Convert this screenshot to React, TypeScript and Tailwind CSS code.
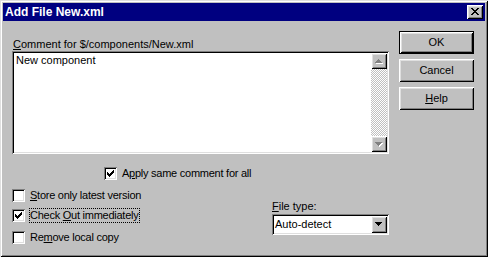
import React from "react";

const raised =
  "shadow-[inset_1px_1px_0_#ffffff,inset_-1px_-1px_0_#000000,inset_2px_2px_0_#dfdfdf,inset_-2px_-2px_0_#808080]";
const sunken =
  "shadow-[inset_1px_1px_0_#808080,inset_-1px_-1px_0_#ffffff,inset_2px_2px_0_#000000,inset_-2px_-2px_0_#dfdfdf]";

const CHECK =
  "M6 0h1v1h-1z M5 1h2v1h-2z M0 2h1v1h-1z M4 2h3v1h-3z M0 3h2v1h-2z M3 3h3v1h-3z M0 4h5v1h-5z M1 5h3v1h-3z M2 6h1v1h-1z";
const DOWN = "M0 0h7v1H0z M1 1h5v1H1z M2 2h3v1H2z M3 3h1v1H3z";
const UP = "M3 0h1v1H3z M2 1h3v1H2z M1 2h5v1H1z M0 3h7v1H0z";
const XMARK =
  "M0 0h2v1H0z M6 0h2v1H6z M1 1h2v1H1z M5 1h2v1H5z M2 2h4v1H2z M3 3h2v1H3z M2 4h4v1H2z M1 5h2v1H1z M5 5h2v1H5z M0 6h2v1H0z M6 6h2v1H6z";

function Box({ checked }: { checked?: boolean }) {
  return (
    <span className={`relative block w-[13px] h-[13px] bg-white shrink-0 ${sunken}`}>
      {checked && (
        <svg
          className="absolute left-[3px] top-[3px]"
          width="7"
          height="7"
          viewBox="0 0 7 7"
          shapeRendering="crispEdges"
        >
          <path d={CHECK} fill="#000" />
        </svg>
      )}
    </span>
  );
}

function Arrow({ d, disabled }: { d: string; disabled?: boolean }) {
  return (
    <svg width="8" height="5" viewBox="0 0 8 5" shapeRendering="crispEdges">
      {disabled ? (
        <>
          <path d={d} fill="#ffffff" transform="translate(1,1)" />
          <path d={d} fill="#808080" />
        </>
      ) : (
        <path d={d} fill="#000000" />
      )}
    </svg>
  );
}

function Btn({ children, def }: { children: React.ReactNode; def?: boolean }) {
  if (def) {
    return (
      <div className="w-[75px] h-[23px] border border-black">
        <div className={`w-full h-full flex items-center justify-center bg-[#c0c0c0] ${raised}`}>
          {children}
        </div>
      </div>
    );
  }
  return (
    <div className={`w-[75px] h-[23px] flex items-center justify-center bg-[#c0c0c0] ${raised}`}>
      {children}
    </div>
  );
}

export default function App() {
  return (
    <div
      className={`w-[488px] h-[257px] bg-[#c0c0c0] p-[3px] text-black text-[11px] leading-[13px] font-['Liberation_Sans',Arial,sans-serif] shadow-[inset_1px_1px_0_#dfdfdf,inset_-1px_-1px_0_#000000,inset_2px_2px_0_#ffffff,inset_-2px_-2px_0_#808080]`}
    >
      {/* Title bar */}
      <div className="h-[18px] bg-[#000080] flex items-center pl-[2px] pr-[2px]">
        <span className="text-white font-bold text-[12px] leading-[18px]">Add File New.xml</span>
        <div className={`ml-auto w-[16px] h-[14px] bg-[#c0c0c0] flex items-start justify-start pl-[4px] pt-[3px] ${raised}`}>
          <svg width="8" height="7" viewBox="0 0 8 7" shapeRendering="crispEdges">
            <path d={XMARK} fill="#000" />
          </svg>
        </div>
      </div>

      {/* Body */}
      <div className="flex pl-[9px] pt-[10px]">
        <div className="w-[377px] pt-[7px]">
          <div className="h-[13px] pl-[1px]">
            <span className="underline">C</span>omment for $/components/New.xml
          </div>
          <div className={`h-[103px] bg-white p-[2px] flex ${sunken}`}>
            <div className="flex-1 pl-[2px] pt-[1px]">New component</div>
            <div className="w-[16px] flex flex-col">
              <div className={`h-[16px] bg-[#c0c0c0] flex items-center justify-center ${raised}`}>
                <Arrow d={UP} disabled />
              </div>
              <div className="flex-1 bg-[image:repeating-conic-gradient(#c0c0c0_0%_25%,#ffffff_0%_50%)] bg-[length:2px_2px]" />
              <div className={`h-[16px] bg-[#c0c0c0] flex items-center justify-center ${raised}`}>
                <Arrow d={DOWN} disabled />
              </div>
            </div>
          </div>

          <div className="mt-[13px] ml-[92px] flex items-center h-[13px] tracking-[-0.25px]">
            <Box checked />
            <span className="ml-[5px]">
              A<span className="underline">p</span>ply same comment for all
            </span>
          </div>

          <div className="flex items-start tracking-[-0.25px]">
            <div className="flex flex-col">
              <div className="mt-[9px] flex items-center h-[13px]">
                <Box />
                <span className="ml-[5px]">
                  <span className="underline">S</span>tore only latest version
                </span>
              </div>
              <div className="mt-[7px] flex items-center h-[13px]">
                <Box checked />
                <span className="ml-[4px] border border-dotted border-black pr-[1px] leading-[12px] h-[15px]">
                  Check <span className="underline">O</span>ut immediately
                </span>
              </div>
              <div className="mt-[9px] flex items-center h-[13px]">
                <Box />
                <span className="ml-[5px]">
                  Re<span className="underline">m</span>ove local copy
                </span>
              </div>
            </div>
            <div className="ml-auto w-[117px] pt-[20px] tracking-normal">
              <div className="h-[14px]">
                <span className="underline">F</span>ile type:
              </div>
              <div className={`h-[21px] bg-white p-[2px] flex ${sunken}`}>
                <div className="flex-1 pl-[1px] leading-[17px]">Auto-detect</div>
                <div className={`w-[16px] h-[17px] bg-[#c0c0c0] flex items-center justify-center ${raised}`}>
                  <Arrow d={DOWN} />
                </div>
              </div>
            </div>
          </div>
        </div>

        <div className="ml-[10px] w-[75px] flex flex-col gap-[5px]">
          <Btn def>OK</Btn>
          <Btn>Cancel</Btn>
          <Btn>
            <span>
              <span className="underline">H</span>elp
            </span>
          </Btn>
        </div>
      </div>
    </div>
  );
}
